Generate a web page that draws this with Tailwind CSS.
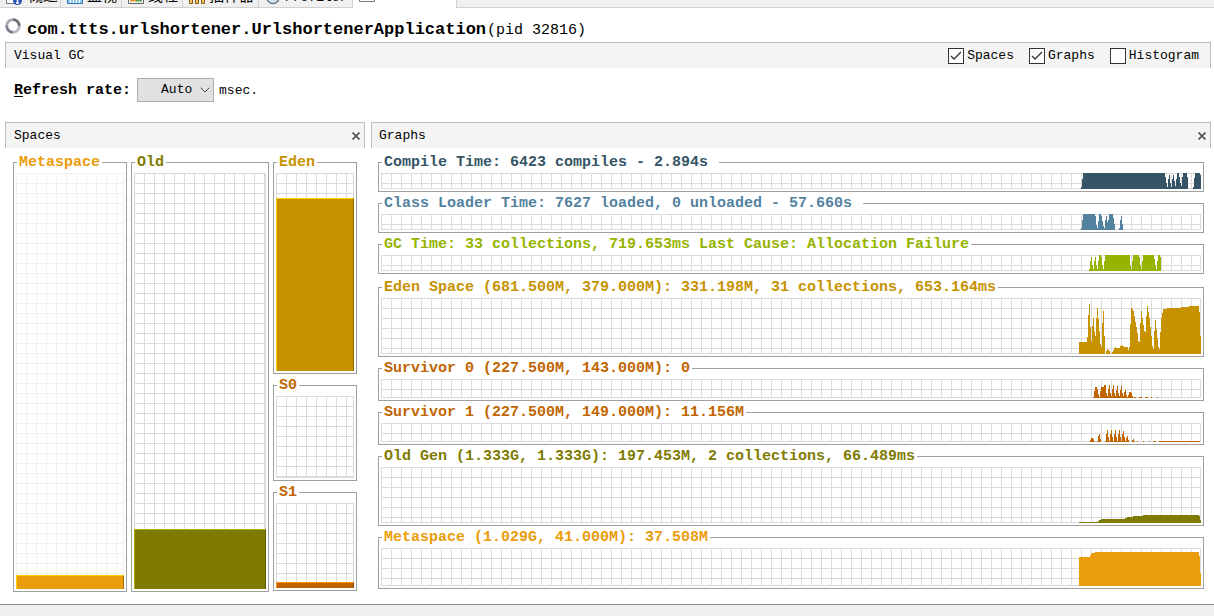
<!DOCTYPE html>
<html lang="en">
<head>
<meta charset="utf-8">
<meta name="viewport" content="width=device-width, initial-scale=1">
<title>Visual GC</title>
<script src="https://cdn.jsdelivr.net/npm/@tailwindcss/browser@4"></script>
</head>
<body class="min-h-screen bg-white flex flex-col text-black text-[13px] leading-5 font-['Liberation_Mono','Noto_Sans_CJK_SC',monospace]">

<!-- Tab strip, scrolled so only its lower edge shows -->
<nav class="flex h-2 overflow-hidden bg-[#f0f0f0] text-[13px]">
  <a href="#overview" class="flex items-end gap-[6px] w-[61px] pl-[6px] border-r border-b border-[#d0d0d0]">
    <svg class="w-4 h-4 shrink-0" viewBox="0 0 16 16"><path d="M.5 1.500h13v11H.5z" fill="#fff" stroke="#777"/><circle cx="11.500" cy="9.500" r="4.500" fill="#2855b8"/><path d="M11.500 8.500v3M10 12h3" stroke="#fff" stroke-width="1.500"/></svg>
    <span class="text-[15px] leading-[18px] whitespace-nowrap">概述</span></a>
  <a href="#monitor" class="flex items-end gap-1 w-[61px] pl-[6px] border-r border-b border-[#d0d0d0]">
    <svg class="w-4 h-4 shrink-0" viewBox="0 0 16 16"><path d="M.5.500h15v12H.5z" fill="#8fc6ee" stroke="#2f74b5"/><path d="M3.500 12V9M6.500 12V8M9.500 12V9M12.500 12V7" stroke="#fff"/></svg>
    <span class="text-[15px] leading-[18px] whitespace-nowrap">监视</span></a>
  <a href="#threads" class="flex items-end gap-1 w-[61px] pl-[6px] border-r border-b border-[#d0d0d0]">
    <svg class="w-4 h-4 shrink-0" viewBox="0 0 16 16"><path d="M.5.500h15v12H.5z" fill="#f4f4f4" stroke="#666"/><path d="M2 9.500h7" stroke="#e39a35" stroke-width="2"/><path d="M8 9.500h6" stroke="#55a04d" stroke-width="2"/></svg>
    <span class="text-[15px] leading-[18px] whitespace-nowrap">线程</span></a>
  <a href="#sampler" class="flex items-end gap-1 w-[76px] pl-[6px] border-r border-b border-[#d0d0d0]">
    <svg class="w-4 h-4 shrink-0" viewBox="0 0 16 16"><path d="M.5 12.500V5h3v7.500zM6.500 12.500V5h3v7.500zM12.500 12.500V5h3v7.500z" fill="#f3c568" stroke="#8c5a12"/></svg>
    <span class="text-[15px] leading-[18px] whitespace-nowrap">抽样器</span></a>
  <a href="#profiler" class="flex items-end gap-1 w-[94px] pl-[6px] border-r border-b border-[#d0d0d0]">
    <svg class="w-4 h-4 shrink-0" viewBox="0 0 16 16"><circle cx="8" cy="6.500" r="6" fill="#d7e8f8" stroke="#6a7482" stroke-width="1.500"/><path d="M8 2v5l3 2" fill="none" stroke="#2f5f9e"/></svg>
    <span class="leading-[18px]">Profiler</span></a>
  <a href="#visualgc" aria-label="Visual GC" class="flex items-end w-[104px] pl-[6px] bg-white border-r border-[#d0d0d0]">
    <svg class="w-4 h-4 shrink-0 mb-[6px]" viewBox="0 0 16 16"><path d="M.5.500h15v15H.5z" fill="#fff" stroke="#777"/></svg></a>
  <div class="flex-1 border-b border-[#d0d0d0]"></div>
</nav>

<header class="flex items-center gap-[6px] h-[34px] pl-[5px] pt-[10px]">
  <svg class="w-4 h-4 shrink-0 mb-2" viewBox="0 0 16 16" fill="none" stroke-width="2.800">
    <path d="M8 1.700A6.300 6.300 0 0 1 14.300 8" stroke="#6c6c76"/><path d="M14.300 8A6.300 6.300 0 0 1 8 14.300" stroke="#b8b8c2"/><path d="M8 14.300A6.300 6.300 0 0 1 1.700 8" stroke="#7c7c88"/><path d="M1.700 8A6.300 6.300 0 0 1 8 1.700" stroke="#a6a6ae"/>
  </svg>
  <h1 class="text-[17px] font-bold whitespace-nowrap">com.ttts.urlshortener.UrlshortenerApplication<span class="text-[15px] font-normal ml-px">(pid 32816)</span></h1>
</header>

<main class="flex-1 flex flex-col pl-[5px] pr-[3px]">
  <div class="flex items-center h-[26px] pl-2 pr-[11px] bg-[#f4f4f4] border border-b-0 border-[#bcbcbc]">
    <h2 class="flex-1">Visual GC</h2>
    <div class="flex gap-[15px]">
      <label class="flex items-center gap-[3px]"><span class="grid size-4"><input type="checkbox" checked class="peer [grid-area:1/1] appearance-none size-4 bg-white border border-[#333]"><svg class="[grid-area:1/1] size-4 pointer-events-none invisible peer-checked:visible" viewBox="0 0 16 16"><path d="M3 8l3 3 7-7" fill="none" stroke="#333" stroke-width="1.300"/></svg></span>Spaces</label>
      <label class="flex items-center gap-[3px]"><span class="grid size-4"><input type="checkbox" checked class="peer [grid-area:1/1] appearance-none size-4 bg-white border border-[#333]"><svg class="[grid-area:1/1] size-4 pointer-events-none invisible peer-checked:visible" viewBox="0 0 16 16"><path d="M3 8l3 3 7-7" fill="none" stroke="#333" stroke-width="1.300"/></svg></span>Graphs</label>
      <label class="flex items-center gap-[3px]"><span class="grid size-4"><input type="checkbox" class="peer [grid-area:1/1] appearance-none size-4 bg-white border border-[#333]"><svg class="[grid-area:1/1] size-4 pointer-events-none invisible peer-checked:visible" viewBox="0 0 16 16"><path d="M3 8l3 3 7-7" fill="none" stroke="#333" stroke-width="1.300"/></svg></span>Histogram</label>
    </div>
  </div>

  <div class="flex items-center h-11 pl-[9px]">
    <label for="rate" class="pt-[2px] text-[15px] font-bold"><span class="underline underline-offset-2">R</span>efresh rate:</label>
    <span class="grid ml-[6px] mr-[5px]">
      <select id="rate" class="[grid-area:1/1] appearance-none w-[77px] h-6 pl-[23px] bg-[#e1e1e1] border border-[#adadad] leading-5"><option>Auto</option><option>100</option><option>500</option><option>1000</option></select>
      <svg class="[grid-area:1/1] justify-self-end self-center w-[10px] h-[6px] mr-[4px] pointer-events-none" viewBox="0 0 10 6"><path d="M.7.700L5 5 9.300.700" fill="none" stroke="#444"/></svg>
    </span>
    <span class="pt-[2px]">msec.</span>
  </div>

  <div class="flex gap-[6px] mt-[10px]">
    <section class="w-[360px] shrink-0">
      <div class="flex items-center h-[26px] pl-2 pr-[3px] bg-[#f4f4f4] border border-b-0 border-[#bcbcbc]">
        <h2 class="flex-1">Spaces</h2>
        <button type="button" aria-label="Close Spaces" class="p-px"><svg class="w-2 h-2" viewBox="0 0 8 8"><path d="M.5.500l7 7M7.500.500l-7 7" stroke="#555" stroke-width="1.700"/></svg></button>
      </div>
      <div class="flex gap-1 px-2 pt-1">
        <fieldset class="w-[114px] border border-[#a0a0a0] px-[2px] pt-px pb-[2px]">
          <legend class="ml-px px-[2px] pt-[2px] text-[15px] leading-[18px] font-bold text-[#eb9c0a]">Metaspace</legend>
          <div class="flex items-end h-[416px] bg-[linear-gradient(#f0f0f0,#f0f0f0),linear-gradient(#f0f0f0_1px,transparent_1px),linear-gradient(90deg,#f0f0f0_1px,transparent_1px)] bg-[size:1px_100%,10px_10px,10px_10px] bg-[position:right_top,0_0,0_0] [background-repeat:no-repeat,repeat,repeat]">
            <div class="flex-1 h-[14px] bg-[#eb9c0a] border-t border-l border-r border-t-[#ffd200] border-l-[#ffd200] border-r-[#a46d07]"></div>
          </div>
        </fieldset>
        <fieldset class="w-[138px] border border-[#a0a0a0] px-[2px] pt-px pb-[2px]">
          <legend class="ml-px px-[2px] pt-[2px] text-[15px] leading-[18px] font-bold text-[#7f7b00]">Old</legend>
          <div class="flex items-end h-[416px] bg-[linear-gradient(#dbdbdb,#dbdbdb),linear-gradient(#dbdbdb_1px,transparent_1px),linear-gradient(90deg,#dbdbdb_1px,transparent_1px)] bg-[size:2px_100%,10px_10px,10px_10px] bg-[position:right_top,0_0,0_0] [background-repeat:no-repeat,repeat,repeat]">
            <div class="flex-1 h-[60px] bg-[#7f7b00] border-t border-l border-r border-t-[#b1ac00] border-l-[#b1ac00] border-r-[#595600]"></div>
          </div>
        </fieldset>
        <div class="w-[84px] flex flex-col gap-px">
          <fieldset class="border border-[#a0a0a0] px-[2px] pt-px pb-[2px]">
            <legend class="ml-px px-[2px] pt-[2px] text-[15px] leading-[18px] font-bold text-[#c79200]">Eden</legend>
            <div class="flex items-end h-[198px] bg-[linear-gradient(#dbdbdb,#dbdbdb),linear-gradient(#dbdbdb_1px,transparent_1px),linear-gradient(90deg,#dbdbdb_1px,transparent_1px)] bg-[size:1px_100%,10px_10px,10px_10px] bg-[position:right_top,0_0,0_0] [background-repeat:no-repeat,repeat,repeat]">
              <div class="flex-1 h-[173px] bg-[#c79200] border-t border-l border-r border-t-[#ffcc00] border-l-[#ffcc00] border-r-[#8b6600]"></div>
            </div>
          </fieldset>
          <fieldset class="border border-[#a0a0a0] px-[2px] pt-px pb-[2px]">
            <legend class="ml-px px-[2px] pt-[2px] text-[15px] leading-[18px] font-bold text-[#c16500]">S0</legend>
            <div class="h-[82px] bg-[linear-gradient(#dbdbdb,#dbdbdb),linear-gradient(#dbdbdb,#dbdbdb),linear-gradient(#dbdbdb_1px,transparent_1px),linear-gradient(90deg,#dbdbdb_1px,transparent_1px)] bg-[size:1px_100%,100%_2px,10px_10px,10px_10px] bg-[position:right_top,left_bottom,0_0,0_0] [background-repeat:no-repeat,no-repeat,repeat,repeat]"></div>
          </fieldset>
          <fieldset class="border border-[#a0a0a0] px-[2px] pt-px pb-[2px]">
            <legend class="ml-px px-[2px] pt-[2px] text-[15px] leading-[18px] font-bold text-[#c16500]">S1</legend>
            <div class="flex items-end h-[85px] bg-[linear-gradient(#dbdbdb,#dbdbdb),linear-gradient(#dbdbdb_1px,transparent_1px),linear-gradient(90deg,#dbdbdb_1px,transparent_1px)] bg-[size:1px_100%,10px_10px,10px_10px] bg-[position:right_top,0_0,0_0] [background-repeat:no-repeat,repeat,repeat]">
              <div class="flex-1 h-[6px] bg-[#c16500] border-t border-l border-r border-t-[#ff8d00] border-l-[#ff8d00] border-r-[#874600]"></div>
            </div>
          </fieldset>
        </div>
      </div>
    </section>

    <section class="flex-1 min-w-0">
      <div class="flex items-center h-[26px] pl-[7px] pr-[3px] bg-[#f4f4f4] border border-b-0 border-[#bcbcbc]">
        <h2 class="flex-1">Graphs</h2>
        <button type="button" aria-label="Close Graphs" class="p-px"><svg class="w-2 h-2" viewBox="0 0 8 8"><path d="M.5.500l7 7M7.500.500l-7 7" stroke="#555" stroke-width="1.700"/></svg></button>
      </div>
      <div id="graphs" class="flex flex-col gap-px px-[7px] pt-1"></div>
    </section>
  </div>
</main>

<footer class="h-3 mt-3 bg-[#f0f0f0] border-t border-[#8c8c96]"></footer>

<template id="graph">
  <fieldset class="min-w-0 border border-[#a0a0a0] px-[2px] pt-px pb-[2px]">
    <legend class="ml-px px-[2px] pt-[2px] text-[15px] leading-[18px] font-bold whitespace-pre"></legend>
    <div class="flex justify-end items-end overflow-hidden bg-[linear-gradient(#dbdbdb,#dbdbdb),linear-gradient(#dbdbdb,#dbdbdb),linear-gradient(#dbdbdb_1px,transparent_1px),linear-gradient(90deg,#dbdbdb_1px,transparent_1px)] bg-[size:1px_100%,100%_1px,10px_10px,10px_10px] bg-[position:right_top,left_bottom,0_0,0_0] [background-repeat:no-repeat,no-repeat,repeat,repeat]">
      <svg class="shrink-0" shape-rendering="crispEdges"><path fill="currentColor"/></svg>
    </div>
  </fieldset>
</template>

<script>
// Samples are bar heights in pixels, oldest first; "h*n" repeats a height n times.
const graphs = [
  { title: "Compile Time: 6423 compiles - 2.894s ", color: "text-[#355566]", plot: "h-4",
    data: "0*2 2 10 16*82 12 6 2 10 14 6 2 10 14 8 3 10 16*2 12 6 3 12 16*4 12 0*5 2 11 16*5 14" },
  { title: "Class Loader Time: 7627 loaded, 0 unloaded - 57.660s ", color: "text-[#5382a1]", plot: "h-4",
    data: "0*2 2 10 16*12 14 5 2 9 16*2 14 9 4 2 10 14 8 10 16*4 12 6 0*4 2 10 14 6 0*78" },
  { title: "GC Time: 33 collections, 719.653ms Last Cause: Allocation Failure", color: "text-[#96b300]", plot: "h-4",
    data: "0*10 2 10 14 6 2 10 14 6 2 10 16*2 14 6 2 10 16*25 6 2 10 16*6 14 6 2 10 16*11 12 6 2 10 16*2 14 0*40" },
  { title: "Eden Space (681.500M, 379.000M): 331.198M, 31 collections, 653.164ms", color: "text-[#c79200]", plot: "h-14", gap: true,
    data: "12*8 17 39 50 27 13 28 36 23 18 36 46 35 23 10 7 31 43 18 0 3 5 4 3 1 0 2 4 6 7 6*4 8 9 8*2 7*4 4 7 30 46 45 43 38 32 27 21 13 12 31 43 36 29 23 22 38 48 42 36 27 18 8 5 23 34 25 16 7 5 22 36 41 45*4 46*14 47*8 48*10 42 18" },
  { title: "Survivor 0 (227.500M, 143.000M): 0", color: "text-[#c16500]", plot: "h-[19px]",
    data: "0*14 1 7 11*2 9 4 1 7 11*3 13*2 5 2 9 13 5 2 9 13 5 2 8 12 5 2 8 12 5 2 6 8 3 1 3 6*2 5 2 0 1*2 0*3 1*3 0*3 1*3 0*3 1 0*5 1 0*43" },
  { title: "Survivor 1 (227.500M, 149.000M): 11.156M", color: "text-[#c16500]", plot: "h-[19px]",
    data: "0*11 2 4*2 3 1 0*2 1 6 8 3 0*4 1 8 12 5 1 8 12 5 1 8 12 5 1 8 12 5 1 8 11 5 1 4 6 2 0*3 2 3 1 0*2 1 0*5 1 0*5 1 0*3 1*3 0*3 1*41 0" },
  { title: "Old Gen (1.333G, 1.333G): 197.453M, 2 collections, 66.489ms", color: "text-[#7f7b00]", plot: "h-14",
    data: "1*19 2 3*2 4*24 5*2 6*6 7*10 8*56 7 3" },
  { title: "Metaspace (1.029G, 41.000M): 37.508M", color: "text-[#eb9c0a]", plot: "h-[38px]",
    data: "29*11 31 33*4 34*104 30 13" }
];
for (const g of graphs) {
  const heights = g.data.split(" ").flatMap(s => { const [h, n = 1] = s.split("*").map(Number); return Array(n).fill(h); });
  const max = Math.max(...heights);
  const node = document.getElementById("graph").content.cloneNode(true);
  const box = node.querySelector("fieldset");
  box.classList.add(g.color);
  if (g.gap) box.classList.add("mt-[2px]");
  box.querySelector("legend").textContent = g.title;
  box.querySelector("div").classList.add(g.plot);
  const svg = box.querySelector("svg");
  svg.setAttribute("width", heights.length);
  svg.setAttribute("height", max);
  svg.querySelector("path").setAttribute("d", "M0 " + max + heights.map(h => "V" + (max - h) + "h1").join("") + "V" + max + "z");
  document.getElementById("graphs").append(node);
}
</script>
</body>
</html>
